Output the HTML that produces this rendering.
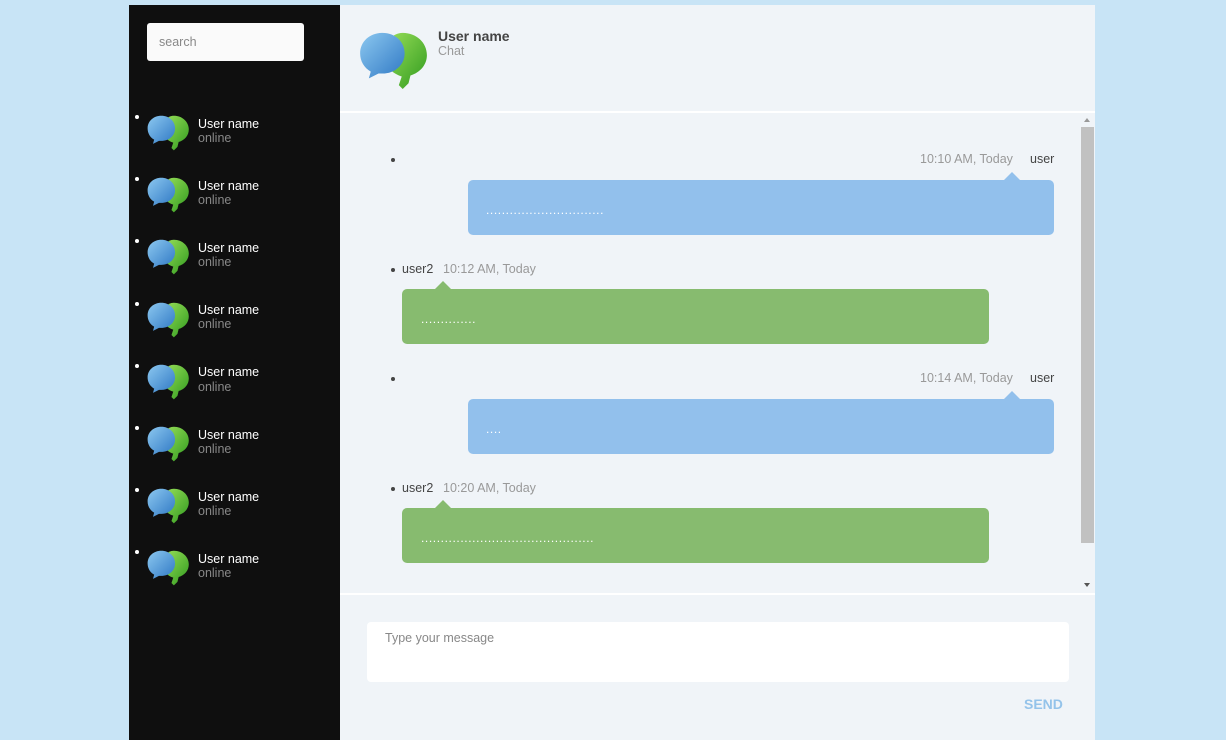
<!DOCTYPE html><html><head><style>
*{margin:0;padding:0;box-sizing:border-box}
body{width:1226px;height:740px;background:#c8e4f6;font-family:"Liberation Sans",sans-serif;position:relative;overflow:hidden}
.a{position:absolute}
#side{left:129px;top:5px;width:211px;height:735px;background:#0f0f0f}
#main{left:340px;top:5px;width:755px;height:735px;background:#f0f4f8}
.search{left:147px;top:23px;width:157px;height:38px;background:#fafafa;border-radius:3px;color:#888;font-size:12.5px;padding:12px 0 0 12px}
.nm{color:#fff;font-size:12.5px}
.on{color:#888;font-size:12.5px}
.dot{width:4px;height:4px;border-radius:2px;background:#fff}
.bd{width:4px;height:4px;border-radius:2px;background:#444}
.blue{background:#92c0ec;border-radius:5px}
.green{background:#87bb6f;border-radius:5px}
.t{color:#999;font-size:12.5px}
.u{color:#444;font-size:12.5px}
.txt{color:#fff;font-size:12px;letter-spacing:0.6px}
.arr{width:0;height:0;border-left:8px solid transparent;border-right:8px solid transparent}
</style></head><body>
<svg width="0" height="0" style="position:absolute"><defs>
<linearGradient id="gb" x1="0" y1="0" x2="1" y2="1"><stop offset="0" stop-color="#8cc8f0"/><stop offset="1" stop-color="#2f78c4"/></linearGradient>
<linearGradient id="gg" x1="0" y1="0" x2="1" y2="1"><stop offset="0" stop-color="#9be05a"/><stop offset="1" stop-color="#2f9a1e"/></linearGradient>
<symbol id="ic" viewBox="0 0 72 62">
<path d="M45 3c14 0 25 10 25 23 0 10-7 18-17 21l-2 8-6 6-4-4 3-9c-10-3-18-11-18-22 0-13 8-23 19-23z" fill="url(#gg)"/>
<path d="M24 3c13 0 23 9 23 21s-10 21-23 21h-4l-10 5 2-7c-7-4-11-11-11-19 0-12 10-21 23-21z" fill="url(#gb)"/>
</symbol></defs></svg>
<div id="side" class="a"></div>
<div id="main" class="a"></div>
<div class="a search">search</div>

<div class="a dot" style="left:135px;top:115px"></div><svg class="a" style="left:147px;top:114px" width="43" height="37"><use href="#ic"/></svg><div class="a nm" style="left:198px;top:117px">User name</div><div class="a on" style="left:198px;top:131px">online</div>
<div class="a dot" style="left:135px;top:177px"></div><svg class="a" style="left:147px;top:176px" width="43" height="37"><use href="#ic"/></svg><div class="a nm" style="left:198px;top:179px">User name</div><div class="a on" style="left:198px;top:193px">online</div>
<div class="a dot" style="left:135px;top:239px"></div><svg class="a" style="left:147px;top:238px" width="43" height="37"><use href="#ic"/></svg><div class="a nm" style="left:198px;top:241px">User name</div><div class="a on" style="left:198px;top:255px">online</div>
<div class="a dot" style="left:135px;top:302px"></div><svg class="a" style="left:147px;top:301px" width="43" height="37"><use href="#ic"/></svg><div class="a nm" style="left:198px;top:303px">User name</div><div class="a on" style="left:198px;top:317px">online</div>
<div class="a dot" style="left:135px;top:364px"></div><svg class="a" style="left:147px;top:363px" width="43" height="37"><use href="#ic"/></svg><div class="a nm" style="left:198px;top:365px">User name</div><div class="a on" style="left:198px;top:380px">online</div>
<div class="a dot" style="left:135px;top:426px"></div><svg class="a" style="left:147px;top:425px" width="43" height="37"><use href="#ic"/></svg><div class="a nm" style="left:198px;top:428px">User name</div><div class="a on" style="left:198px;top:442px">online</div>
<div class="a dot" style="left:135px;top:488px"></div><svg class="a" style="left:147px;top:487px" width="43" height="37"><use href="#ic"/></svg><div class="a nm" style="left:198px;top:490px">User name</div><div class="a on" style="left:198px;top:504px">online</div>
<div class="a dot" style="left:135px;top:550px"></div><svg class="a" style="left:147px;top:549px" width="43" height="37"><use href="#ic"/></svg><div class="a nm" style="left:198px;top:552px">User name</div><div class="a on" style="left:198px;top:566px">online</div>

<svg class="a" style="left:359px;top:30px" width="70" height="60"><use href="#ic"/></svg>
<div class="a" style="left:438px;top:28px;font-size:14px;font-weight:bold;color:#444">User name</div>
<div class="a" style="left:438px;top:44px;font-size:12.5px;color:#999">Chat</div>
<div class="a" style="left:340px;top:111px;width:755px;height:2px;background:#fff"></div>

<div class="a" style="left:1081px;top:127px;width:13px;height:416px;background:#c1c1c1"></div>
<div class="a" style="left:1084px;top:118px;border-left:3px solid transparent;border-right:3px solid transparent;border-bottom:4px solid #999"></div>
<div class="a" style="left:1084px;top:583px;border-left:3px solid transparent;border-right:3px solid transparent;border-top:4px solid #555"></div>

<div class="a bd" style="left:391px;top:158px"></div>
<div class="a t" style="left:920px;top:152px">10:10 AM, Today</div><div class="a u" style="left:1030px;top:152px">user</div>
<div class="a arr" style="left:1004px;top:172px;border-bottom:8px solid #92c0ec"></div>
<div class="a blue" style="left:468px;top:180px;width:586px;height:55px"></div>
<div class="a txt" style="left:486px;top:203px">..............................</div>

<div class="a bd" style="left:391px;top:268px"></div>
<div class="a u" style="left:402px;top:262px">user2</div><div class="a t" style="left:443px;top:262px">10:12 AM, Today</div>
<div class="a arr" style="left:435px;top:281px;border-bottom:8px solid #87bb6f"></div>
<div class="a green" style="left:402px;top:289px;width:587px;height:55px"></div>
<div class="a txt" style="left:421px;top:312px">..............</div>

<div class="a bd" style="left:391px;top:377px"></div>
<div class="a t" style="left:920px;top:371px">10:14 AM, Today</div><div class="a u" style="left:1030px;top:371px">user</div>
<div class="a arr" style="left:1004px;top:391px;border-bottom:8px solid #92c0ec"></div>
<div class="a blue" style="left:468px;top:399px;width:586px;height:55px"></div>
<div class="a txt" style="left:486px;top:422px">....</div>

<div class="a bd" style="left:391px;top:487px"></div>
<div class="a u" style="left:402px;top:481px">user2</div><div class="a t" style="left:443px;top:481px">10:20 AM, Today</div>
<div class="a arr" style="left:435px;top:500px;border-bottom:8px solid #87bb6f"></div>
<div class="a green" style="left:402px;top:508px;width:587px;height:55px"></div>
<div class="a txt" style="left:421px;top:531px">............................................</div>

<div class="a" style="left:340px;top:593px;width:755px;height:2px;background:#fff"></div>
<div class="a" style="left:367px;top:622px;width:702px;height:60px;background:#fff;border-radius:4px;color:#888;font-size:12.5px;padding:9px 0 0 18px">Type your message</div>
<div class="a" style="left:1024px;top:696px;color:#94c3ea;font-weight:bold;font-size:14px">SEND</div>
</body></html>
